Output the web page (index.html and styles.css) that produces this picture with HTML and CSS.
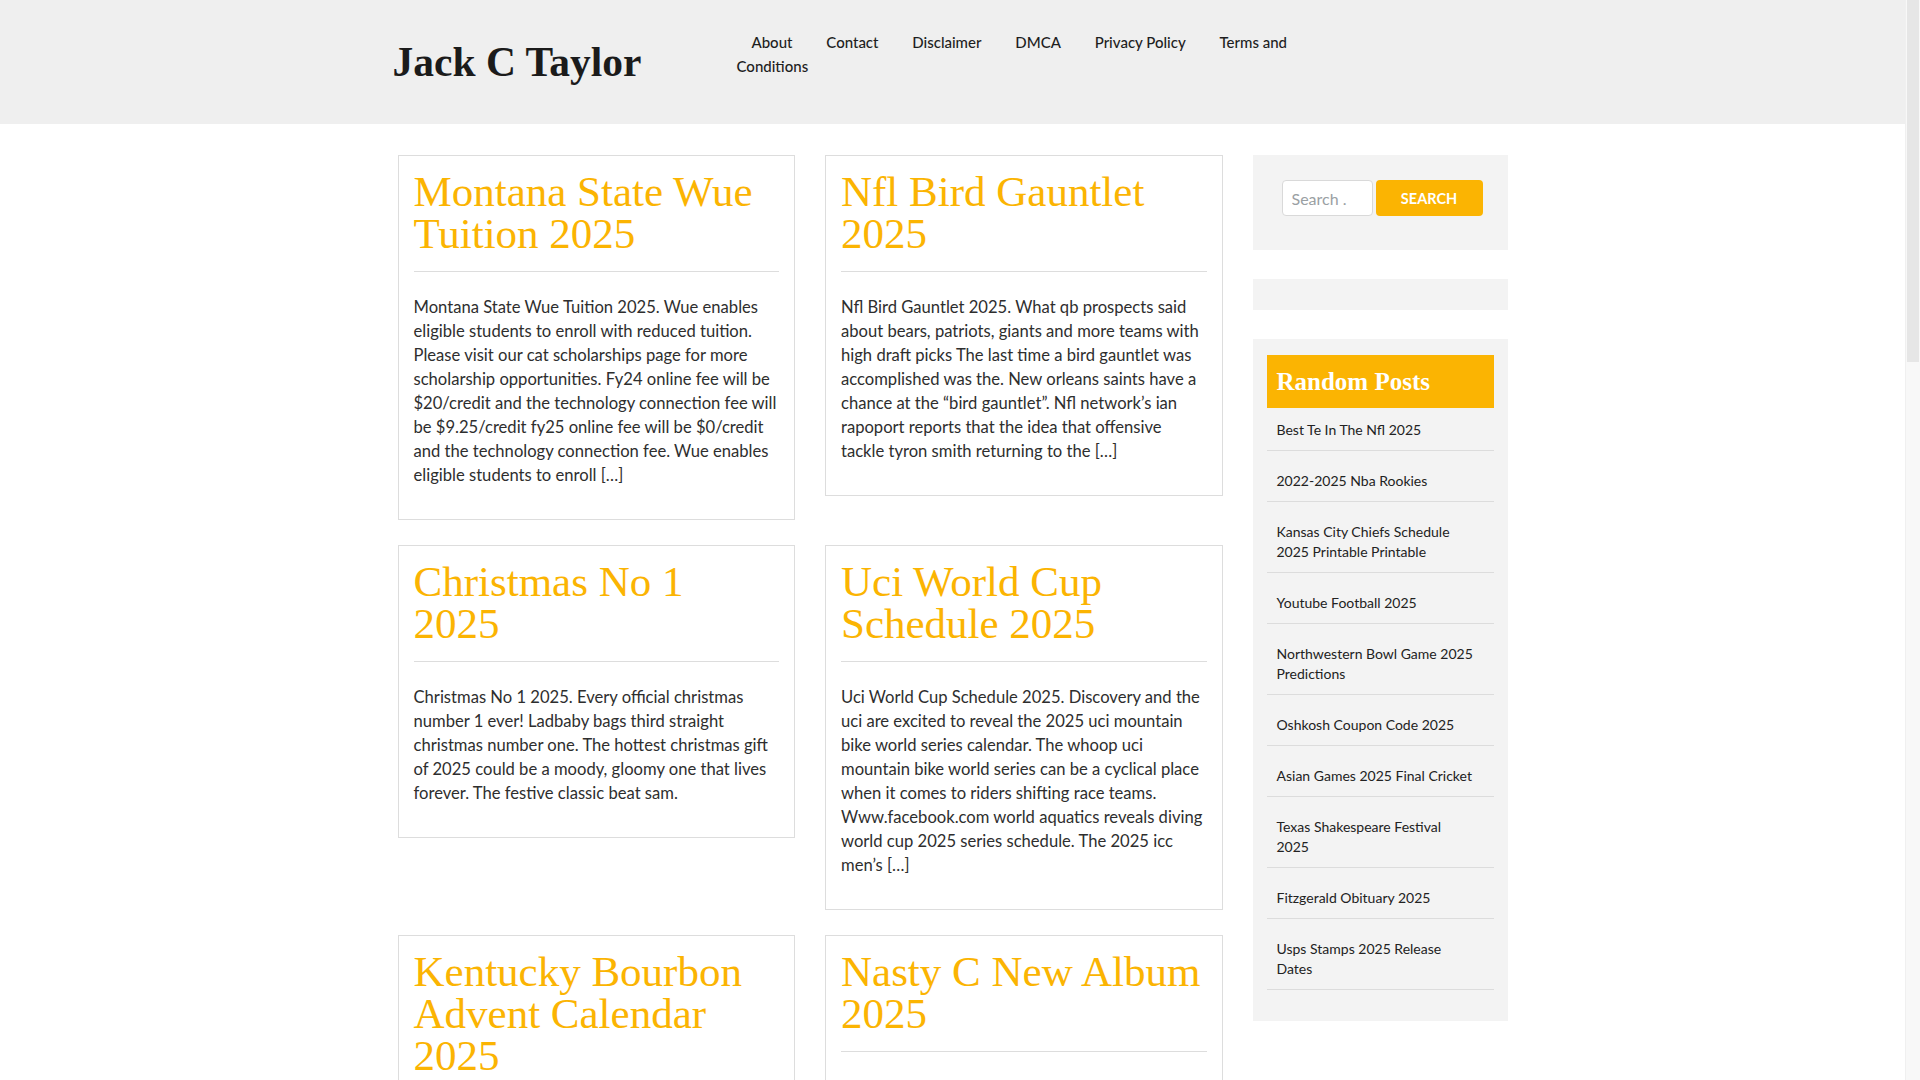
FILE: index.html
```html
<!DOCTYPE html>
<html lang="en">
<head>
<meta charset="utf-8">
<title>Jack C Taylor</title>
<link rel="stylesheet" href="styles.css">
</head>
<body>
<div class="page">
  <header class="site-header">
    <div class="container header-inner">
      <div class="branding"><a class="site-title" href="#">Jack C Taylor</a></div>
      <nav class="main-nav">
        <ul>
          <li><a href="#">About</a></li>
          <li><a href="#">Contact</a></li>
          <li><a href="#">Disclaimer</a></li>
          <li><a href="#">DMCA</a></li>
          <li><a href="#">Privacy Policy</a></li>
          <li><a href="#">Terms and Conditions</a></li>
        </ul>
      </nav>
    </div>
  </header>

  <div class="container content">
    <main class="posts">
      <article class="card">
        <h2 class="card-title"><a href="#">Montana State Wue Tuition 2025</a></h2>
        <div class="card-excerpt"><p>Montana State Wue Tuition 2025. Wue enables eligible students to enroll with reduced tuition. Please visit our cat scholarships page for more scholarship opportunities. Fy24 online fee will be $20/credit and the technology connection fee will be $9.25/credit fy25 online fee will be $0/credit and the technology connection fee. Wue enables eligible students to enroll […]</p></div>
      </article>
      <article class="card">
        <h2 class="card-title"><a href="#">Nfl Bird Gauntlet 2025</a></h2>
        <div class="card-excerpt"><p>Nfl Bird Gauntlet 2025. What qb prospects said about bears, patriots, giants and more teams with high draft picks The last time a bird gauntlet was accomplished was the. New orleans saints have a chance at the “bird gauntlet”. Nfl network’s ian rapoport reports that the idea that offensive tackle tyron smith returning to the […]</p></div>
      </article>
      <article class="card">
        <h2 class="card-title"><a href="#">Christmas No 1 2025</a></h2>
        <div class="card-excerpt"><p>Christmas No 1 2025. Every official christmas number 1 ever! Ladbaby bags third straight christmas number one. The hottest christmas gift of 2025 could be a moody, gloomy one that lives forever. The festive classic beat sam.</p></div>
      </article>
      <article class="card">
        <h2 class="card-title"><a href="#">Uci World Cup Schedule 2025</a></h2>
        <div class="card-excerpt"><p>Uci World Cup Schedule 2025. Discovery and the uci are excited to reveal the 2025 uci mountain bike world series calendar. The whoop uci mountain bike world series can be a cyclical place when it comes to riders shifting race teams. Www.facebook.com world aquatics reveals diving world cup 2025 series schedule. The 2025 icc men’s […]</p></div>
      </article>
      <article class="card">
        <h2 class="card-title"><a href="#">Kentucky Bourbon Advent Calendar 2025</a></h2>
      </article>
      <article class="card">
        <h2 class="card-title"><a href="#">Nasty C New Album 2025</a></h2>
      </article>
    </main>

    <aside class="sidebar">
      <section class="widget widget-search">
        <form class="search-form" onsubmit="return false">
          <input class="search-field" type="search" placeholder="Search .">
          <button class="search-submit" type="submit">SEARCH</button>
        </form>
      </section>
      <section class="widget widget-empty"></section>
      <section class="widget widget-posts">
        <h3 class="widget-title">Random Posts</h3>
        <ul class="post-list">
          <li><a href="#">Best Te In The Nfl 2025</a></li>
          <li><a href="#">2022-2025 Nba Rookies</a></li>
          <li><a href="#">Kansas City Chiefs Schedule 2025 Printable Printable</a></li>
          <li><a href="#">Youtube Football 2025</a></li>
          <li><a href="#">Northwestern Bowl Game 2025 Predictions</a></li>
          <li><a href="#">Oshkosh Coupon Code 2025</a></li>
          <li><a href="#">Asian Games 2025 Final Cricket</a></li>
          <li><a href="#">Texas Shakespeare Festival 2025</a></li>
          <li><a href="#">Fitzgerald Obituary 2025</a></li>
          <li><a href="#">Usps Stamps 2025 Release Dates</a></li>
        </ul>
      </section>
    </aside>
  </div>
</div>
<div class="scrollbar"><div class="scrollbar-thumb"></div></div>
</body>
</html>
```
FILE: styles.css
```css
html, body {
  margin: 0;
  padding: 0;
  height: 100%;
  overflow: hidden;
}

body {
  display: flex;
  background: #ffffff;
  color: #2e2e2e;
  font-family: Lato, "Noto Sans", "Liberation Sans", sans-serif;
  font-size: 16.6px;
  line-height: 24px;
}

a {
  color: inherit;
  text-decoration: none;
}

.page {
  flex: 1;
  min-width: 0;
  height: 100vh;
  overflow: hidden;
}

.scrollbar {
  width: 15px;
  flex-shrink: 0;
  height: 100vh;
  background: #f8f8f8;
  box-sizing: border-box;
  border-left: 1px solid #f0f0f0;
}

.scrollbar-thumb {
  height: 362px;
  margin: 0 1px;
  background: #e6e6e6;
}

.container {
  width: 1110px;
  margin: 0 auto;
}

/* Header */
.site-header {
  background: #efefef;
  height: 124px;
}

.header-inner {
  display: flex;
  align-items: flex-start;
}

.branding {
  width: 339px;
  flex-shrink: 0;
  padding-top: 38px;
}

.site-title {
  display: block;
  font-family: "Liberation Serif", "Times New Roman", serif;
  font-weight: 700;
  font-size: 41.5px;
  line-height: 49px;
  color: #1b1b1b;
  margin-left: -5px;
}

.main-nav {
  width: 555px;
  padding-top: 31px;
}

.main-nav ul {
  margin: 0;
  padding: 0;
  list-style: none;
  font-size: 15px;
  line-height: 23.5px;
  font-weight: 500;
  color: #1e1e1e;
}

.main-nav li {
  display: inline;
}

.main-nav a {
  padding: 0 15px;
}

/* Content */
.content {
  display: flex;
  gap: 30px;
  align-items: flex-start;
  padding-top: 31px;
}

.posts {
  width: 825px;
  flex-shrink: 0;
  display: grid;
  grid-template-columns: 1fr 1fr;
  column-gap: 30px;
  row-gap: 25px;
  align-items: start;
}

.card {
  border: 1px solid #dddddd;
  padding: 15px 15px 16px;
  background: #ffffff;
}

.card-title {
  margin: 0 0 16px;
  font-family: "Liberation Serif", "Times New Roman", serif;
  font-weight: 400;
  font-size: 43px;
  line-height: 42px;
  color: #fbb402;
  padding-bottom: 16px;
  border-bottom: 1px solid #dddddd;
}

.card-excerpt p {
  margin: 0 0 16px;
  padding-top: 7px;
}

/* Sidebar */
.sidebar {
  width: 255px;
  flex-shrink: 0;
}

.widget {
  background: #f3f3f3;
  margin-bottom: 29px;
}

.widget-search {
  padding: 25px 24px 34px 29px;
}

.search-form {
  display: flex;
  gap: 3px;
}

.search-field {
  width: 91px;
  height: 36px;
  box-sizing: border-box;
  border: 1px solid #d9d9d9;
  border-radius: 4px;
  background: #ffffff;
  padding: 0 9px;
  font-family: Lato, "Noto Sans", sans-serif;
  font-size: 16px;
  color: #333;
  outline: none;
}

.search-field::placeholder {
  color: #9aa0a3;
}

.search-submit {
  width: 107px;
  height: 36px;
  border: none;
  border-radius: 4px;
  background: #fbb402;
  color: #ffffff;
  font-family: Lato, "Noto Sans", sans-serif;
  font-weight: 700;
  font-size: 14.5px;
  padding: 0;
}

.widget-empty {
  height: 31px;
}

.widget-posts {
  padding: 16px 14px 31px;
}

.widget-title {
  margin: 0;
  background: #fbb402;
  color: #ffffff;
  font-family: "Liberation Serif", "Times New Roman", serif;
  font-weight: 700;
  font-size: 25px;
  line-height: 33px;
  padding: 10px 10px;
}

.post-list {
  margin: 0;
  padding: 2px 0 0;
  list-style: none;
  font-size: 14px;
  line-height: 20px;
  color: #222222;
}

.post-list li {
  padding: 10px 18px 10px 10px;
  border-bottom: 1px solid #dcdcdc;
}

.post-list li + li {
  margin-top: 10px;
}
```
